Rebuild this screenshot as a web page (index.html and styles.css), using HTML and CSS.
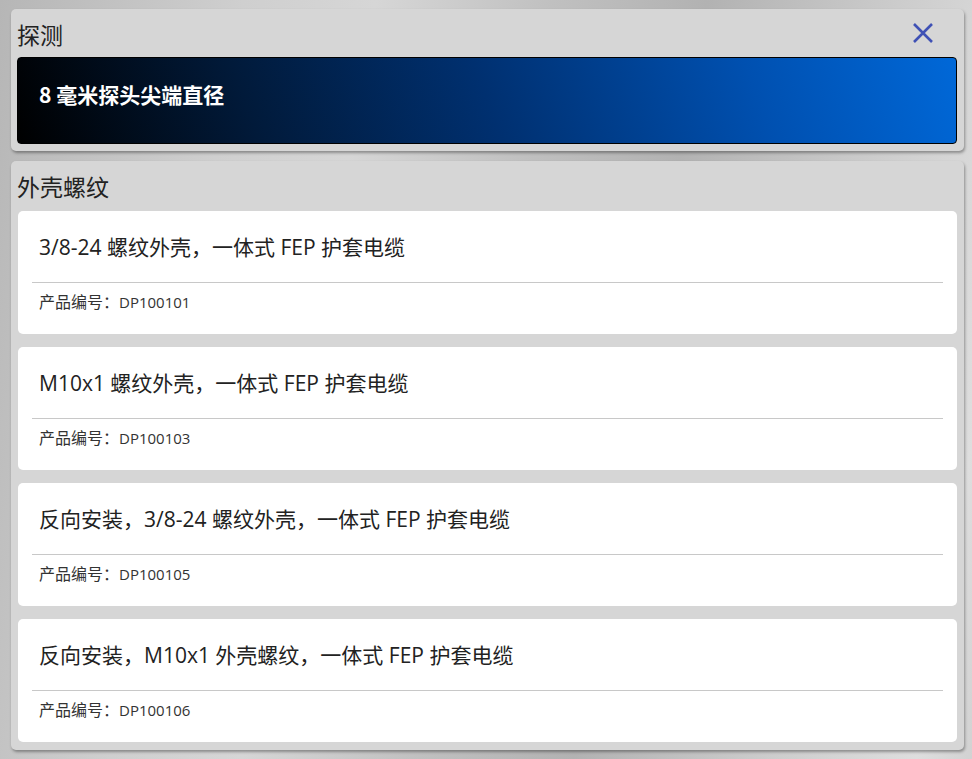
FILE: index.html
```html
<!DOCTYPE html>
<html lang="zh-CN">
<head>
<meta charset="utf-8">
<title>探测</title>
<link rel="stylesheet" href="styles.css">
</head>
<body>
<div class="page">
  <section class="panel">
    <header class="panel-head">
      <h2 class="panel-title">探测</h2>
      <button class="close" aria-label="关闭">
        <svg width="22" height="22" viewBox="0 0 22 22"><path d="M2 2 L20 20 M20 2 L2 20" stroke="#3f51b5" stroke-width="2.6" fill="none"/></svg>
      </button>
    </header>
    <div class="probe">8 毫米探头尖端直径</div>
  </section>

  <section class="panel">
    <header class="panel-head">
      <h2 class="panel-title">外壳螺纹</h2>
    </header>
    <div class="cards">
      <article class="card">
        <div class="card-title">3/8-24 螺纹外壳，一体式 FEP 护套电缆</div>
        <div class="card-code"><span class="code-label">产品编号：</span>DP100101</div>
      </article>
      <article class="card">
        <div class="card-title">M10x1 螺纹外壳，一体式 FEP 护套电缆</div>
        <div class="card-code"><span class="code-label">产品编号：</span>DP100103</div>
      </article>
      <article class="card">
        <div class="card-title">反向安装，3/8-24 螺纹外壳，一体式 FEP 护套电缆</div>
        <div class="card-code"><span class="code-label">产品编号：</span>DP100105</div>
      </article>
      <article class="card">
        <div class="card-title">反向安装，M10x1 外壳螺纹，一体式 FEP 护套电缆</div>
        <div class="card-code"><span class="code-label">产品编号：</span>DP100106</div>
      </article>
    </div>
  </section>
</div>
</body>
</html>
```

FILE: styles.css
```css
html, body {
  margin: 0;
  height: 100%;
}

body {
  font-family: "Noto Sans CJK SC", "Noto Sans", sans-serif;
  color: #222;
  background: linear-gradient(100deg, #b6b6b6 0%, #cfcfcf 22%, #d6d6d6 34%, #c0c0c0 50%, #b2b2b2 64%, #cdcdcd 82%, #dedede 95%, #d2d2d2 100%);
  overflow: hidden;
}

.page {
  padding: 9px 8px 0 11px;
  display: flex;
  flex-direction: column;
  gap: 10px;
}

.panel {
  background: #d6d6d6;
  border-radius: 5px;
  box-shadow: 1px 2px 3px rgba(0, 0, 0, 0.35);
  padding: 0 7px 7px 6px;
}

.panel-head {
  height: 48px;
  display: flex;
  align-items: center;
  justify-content: space-between;
}

.panel-title {
  margin: 0;
  font-size: 23px;
  font-weight: 400;
  line-height: 30px;
  padding-top: 1px;
  color: #222;
}

.close {
  border: 0;
  background: none;
  padding: 0;
  width: 22px;
  height: 22px;
  margin-right: 23px;
  margin-top: -1px;
  cursor: pointer;
}

.close svg {
  display: block;
}

.probe {
  height: 87px;
  box-sizing: border-box;
  border: 1px solid #000;
  border-radius: 4px;
  background: linear-gradient(70deg, #000 0%, #011a3a 25%, #003070 50%, #0050b0 78%, #0068d8 100%);
  color: #fff;
  font-weight: 700;
  font-size: 21px;
  line-height: 28px;
  padding: 22px 21px 0 21px;
}

.cards {
  display: flex;
  flex-direction: column;
  gap: 13px;
  padding: 2px 0 1px 1px;
}

.card {
  background: #fff;
  border-radius: 5px;
  padding: 0 14px;
  height: 123px;
  box-sizing: border-box;
}

.card-title {
  font-family: "Open Sans", "Noto Sans CJK SC", sans-serif;
  font-size: 21px;
  line-height: 28px;
  padding: 22px 7px 21px;
  border-bottom: 1px solid #c8c8c8;
}

.card-code {
  font-family: "Open Sans", "Noto Sans CJK SC", sans-serif;
  font-size: 15px;
  line-height: 20px;
  padding: 9px 7px 0;
  color: #333;
}

.code-label {
  font-size: 16px;
}
```
